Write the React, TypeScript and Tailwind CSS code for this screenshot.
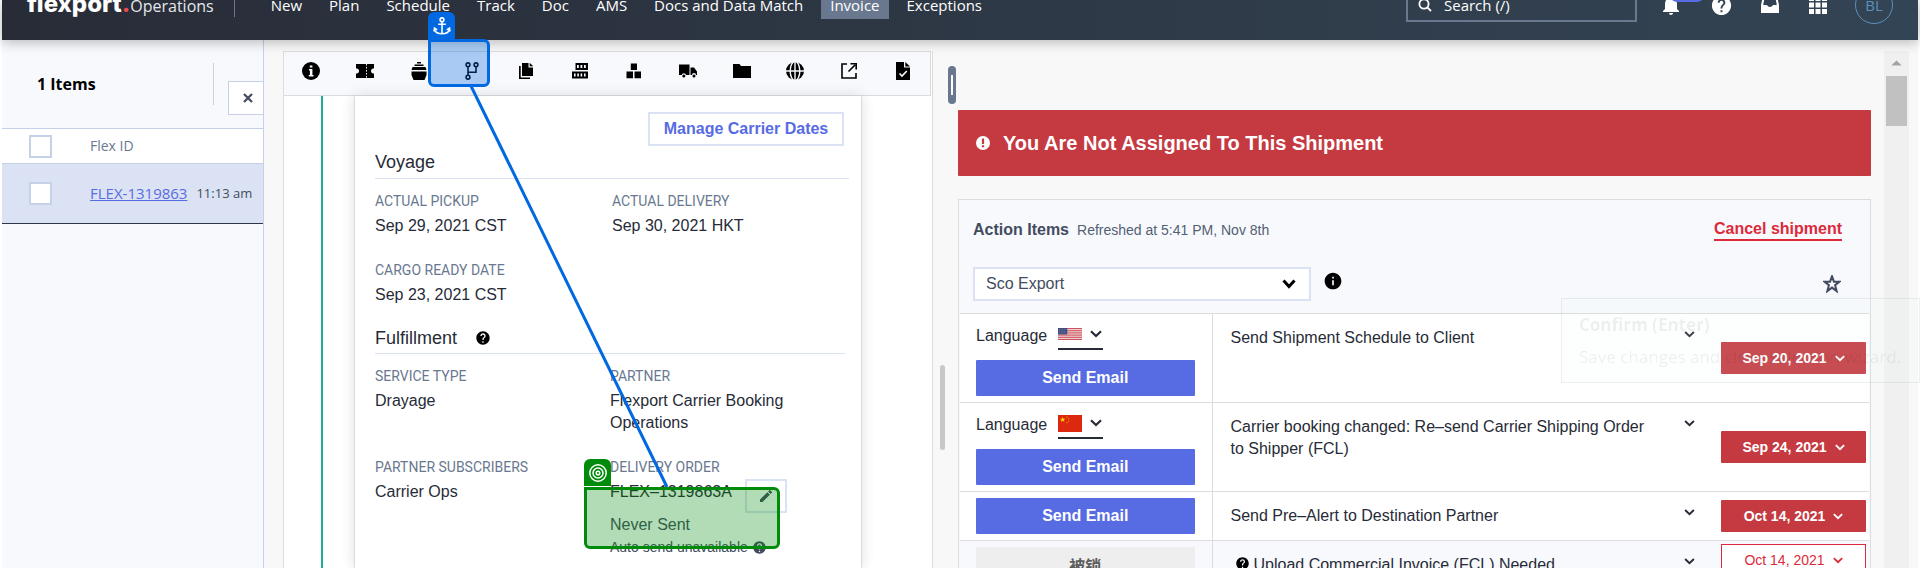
import React from "react";
import {
  MdArrowDropUp,
  MdEdit,
  MdHelp,
  MdInfo,
  MdNotifications,
} from "react-icons/md";

const bodyFont = "font-['Liberation_Sans',sans-serif]";
const labelFont = "font-['Roboto','Liberation_Sans',sans-serif]";
const openSans = "font-['Open_Sans','Noto_Sans',sans-serif]";

function Chevron({ className }: { className: string }) {
  return (
    <svg viewBox="0 0 12 8" className={className} fill="none" stroke="currentColor" strokeWidth="2.2" aria-hidden="true">
      <path d="M1 1.2 L6 6 L11 1.2" />
    </svg>
  );
}

function Glyph({ children, className = "size-[18px]" }: { children: React.ReactNode; className?: string }) {
  return (
    <svg viewBox="0 0 18 18" className={className} fill="currentColor" aria-hidden="true">
      {children}
    </svg>
  );
}

const tools: { label: string; icon: React.ReactNode }[] = [
  {
    label: "Info",
    icon: (
      <Glyph>
        <circle cx="9" cy="9" r="9" />
        <path fill="#f8f9fd" d="M7.8 3.4h2.6v2.2H7.8zM7 7h3.4v6H11.500v1.400H6.800V13H7.900V8.400H7z" />
      </Glyph>
    ),
  },
  {
    label: "Ticket",
    icon: (
      <Glyph>
        <path d="M0 2h18v4.500h-1.200a2.600 2.600 0 0 0 0 5H18V16H0v-4.500h1.200a2.600 2.600 0 0 0 0-5H0z" />
        <path stroke="#f8f9fd" strokeWidth="1" strokeDasharray="1.500 1.500" d="M10.500 2v14" />
      </Glyph>
    ),
  },
  {
    label: "Vessel",
    icon: (
      <Glyph>
        <path d="M7 0h4v1.500H7zM4.500 2.500h9v1.600h-9zM2.500 5h13l1 3h-15zM1.500 9.500h15V13L14.500 18h-11L1.500 13z" />
      </Glyph>
    ),
  },
  {
    label: "Route",
    icon: (
      <Glyph>
        <g fill="none" stroke="currentColor" strokeWidth="1.600">
          <circle cx="5" cy="2.800" r="1.900" />
          <circle cx="5" cy="15.200" r="1.900" />
          <circle cx="13" cy="2.800" r="1.900" />
          <path d="M5 4.700v8.600M5 10.200h8V4.700" />
        </g>
      </Glyph>
    ),
  },
  {
    label: "Documents",
    icon: (
      <Glyph>
        <path d="M5 1h6.500v4.500H16V14H5zM12.700 0.800L16.200 4.300h-3.500zM2 4h1.700v11.500H13V17H2z" />
      </Glyph>
    ),
  },
  {
    label: "Containers",
    icon: (
      <Glyph>
        <path d="M4.500 1H17v7H4.500zM1 9.500h16v7H1z" />
        <path fill="#f8f9fd" d="M6 3h1.800v3H6zM9.500 3h1.800v3H9.500zM13 3h1.800v3H13zM3 11.500h1.600v3H3zM6.300 11.500h1.600v3H6.300zM9.600 11.500h1.600v3H9.600zM13 11.500h1.600v3H13z" />
      </Glyph>
    ),
  },
  {
    label: "Cargo",
    icon: (
      <Glyph>
        <path d="M5.800 1.500H12V8H5.800zM1.500 9.500H8v6.800H1.500zM9.500 9.500H16v6.800H9.500z" />
      </Glyph>
    ),
  },
  {
    label: "Trucking",
    icon: (
      <Glyph>
        <path d="M0 2.500h10.500V13H7a2.200 2.200 0 0 0-4.300 0H0zM11.500 5.500h3.500L18 9.500V13h-1a2 2 0 0 0-4 0h-1.500z" />
        <circle cx="4.800" cy="14" r="1.500" />
        <circle cx="15" cy="14" r="1.500" />
      </Glyph>
    ),
  },
  {
    label: "Files",
    icon: (
      <Glyph>
        <path d="M0 2h6.500l1.500 2h10v12H0z" />
      </Glyph>
    ),
  },
  {
    label: "Web",
    icon: (
      <Glyph>
        <circle cx="9" cy="9" r="9" />
        <g fill="none" stroke="#f8f9fd" strokeWidth="1.400">
          <path d="M9 0v18M0 9h18" />
          <ellipse cx="9" cy="9" rx="4.800" ry="9.500" />
        </g>
      </Glyph>
    ),
  },
  {
    label: "Open",
    icon: (
      <Glyph>
        <g fill="none" stroke="currentColor" strokeWidth="1.600">
          <path d="M7 2H2v14h14v-5M8.500 9.500L15 3M10.500 1.800H16.200V7.500" />
        </g>
      </Glyph>
    ),
  },
  {
    label: "Approve",
    icon: (
      <Glyph>
        <path d="M2 0h8v5.500h6V18H2zM11.300 0L16 4.500h-4.700z" />
        <path fill="none" stroke="#f8f9fd" strokeWidth="1.600" d="M5.500 11.500L8 14l4.800-5" />
      </Glyph>
    ),
  },
];

const navItems = ["New", "Plan", "Schedule", "Track", "Doc", "AMS", "Docs and Data Match", "Invoice", "Exceptions"];

function Header() {
  return (
    <header className="relative z-10 h-10 shrink-0 overflow-visible bg-linear-to-r from-[#282c37] to-[#334454] text-white shadow-[0_2px_12px_rgba(0,0,0,0.28)]">
      <div className={`-mt-[30px] flex h-[70px] items-center pr-[25px] pl-[25px] text-[15px] ${openSans}`}>
        <a href="#home" className="flex items-baseline">
          <span className="font-['Inter'] text-2xl leading-6 font-extrabold">flexport</span>
          <span className="font-['Inter'] text-2xl leading-6 font-extrabold text-[#f4484f]">.</span>
          <span className="text-base leading-6 text-gray-200">Operations</span>
        </a>
        <span className="ml-5 h-6 w-px bg-[#6a788e]" />
        <nav className="ml-[27px] flex items-center gap-[9px]">
          {navItems.map((item) => (
            <a
              key={item}
              href={`#${item}`}
              className={item === "Invoice" ? "bg-[#69788f] px-[9px] py-1 leading-5" : "px-[9px] py-1 leading-5"}
            >
              {item}
            </a>
          ))}
        </nav>
        <label className="ml-auto flex h-[34px] w-[231px] shrink-0 items-center gap-3 border-2 border-[#69788f] pl-[10px]">
          <svg viewBox="0 0 14 14" className="size-3.5" fill="none" stroke="white" strokeWidth="1.800" aria-hidden="true">
            <circle cx="6" cy="6" r="4.600" />
            <path d="M9.300 9.300L13 13" />
          </svg>
          <input type="text" aria-label="Search" placeholder="Search (/)" className="w-40 bg-transparent placeholder:text-white" />
        </label>
        <div className="ml-[22px] flex shrink-0 items-center">
          <button aria-label="Notifications" className="relative">
            <MdNotifications className="size-6" />
            <span className="absolute -top-2 left-2.5 h-[17px] w-9 rounded-full bg-[#576be3]" />
          </button>
          <button aria-label="Help" className="ml-[27px]">
            <MdHelp className="size-[23px]" />
          </button>
          <button aria-label="Inbox" className="ml-[28px]">
            <svg viewBox="0 0 18 18" className="size-[18px]" fill="white" aria-hidden="true">
              <path fillRule="evenodd" d="M2 0h14l2 9v8H0V9zM3.500 2L2.200 9H6a3.200 3.200 0 0 0 6 0h3.800l-1.300-7z" />
            </svg>
          </button>
          <button aria-label="Apps" className="ml-[30px]">
            <svg viewBox="0 0 18 18" className="size-[18px]" fill="white" aria-hidden="true">
              <path d="M0 0h5v5H0zM6.500 0h5v5h-5zM13 0h5v5h-5zM0 6.500h5v5H0zM6.500 6.500h5v5h-5zM13 6.500h5v5h-5zM0 13h5v5H0zM6.500 13h5v5h-5zM13 13h5v5h-5z" />
            </svg>
          </button>
          <button className="ml-[28px] flex size-[38px] items-center justify-center rounded-full border border-[#5b90bd] text-[15px] text-[#5b90bd]">
            BL
          </button>
        </div>
      </div>
    </header>
  );
}

function Sidebar() {
  return (
    <aside className={`w-[262px] shrink-0 border-r border-[#c5d1e6] bg-[#f8f9fd] ${openSans}`}>
      <div className="relative flex h-[88px] items-center pl-[35px]">
        <h2 className="text-base font-bold text-black">1 Items</h2>
        <span className="mr-[49px] ml-auto h-[42px] w-px bg-[#c5d1e6]" />
        <button
          aria-label="Close"
          className="absolute right-0 bottom-[13px] flex h-[34px] w-[35px] items-center justify-center border border-r-0 border-[#c5d1e6] bg-white pl-1 text-[#434c5e]"
        >
          <svg viewBox="0 0 10 10" className="size-2.5" stroke="currentColor" strokeWidth="2.200" aria-hidden="true">
            <path d="M1 1l8 8M9 1L1 9" />
          </svg>
        </button>
      </div>
      <div className="flex h-9 items-center border-y border-[#c5d1e6] bg-white pl-[27px] text-sm text-[#6a788e]">
        <input type="checkbox" aria-label="Select all" className="size-[23px] appearance-none border-2 border-[#c5d1e6] bg-white" />
        <span className="ml-[38px]">Flex ID</span>
      </div>
      <div className="flex h-[60px] items-center border-b border-[#2b3648] bg-[#dae2f3] pl-[27px]">
        <input type="checkbox" aria-label="Select FLEX-1319863" className="size-[23px] appearance-none border-2 border-[#c5d1e6] bg-white" />
        <a href="#flex" className="ml-[38px] text-[15px] text-[#576be3] underline">FLEX-1319863</a>
        <span className="ml-[9px] text-[13px] whitespace-nowrap text-[#434c5e]">11:13 am</span>
      </div>
    </aside>
  );
}

function Field({ label, children }: { label: string; children: React.ReactNode }) {
  return (
    <div>
      <dt className={`text-sm leading-5 text-[#69788f] ${labelFont}`}>{label}</dt>
      <dd className="mt-1 text-base leading-[22px] text-[#272b37]">{children}</dd>
    </div>
  );
}

function DetailsPanel() {
  return (
    <section className="mt-[11px] ml-[19px] flex w-[650px] shrink-0 flex-col border-r border-[#dcdcdc] bg-white">
      <div className="mr-px grid h-[45px] shrink-0 grid-cols-12 border border-[#dcdcdc] bg-[#f8f9fd] text-black">
        {tools.map((tool) => (
          <button key={tool.label} aria-label={tool.label} className="flex items-center justify-center pb-[5px]">
            {tool.icon}
          </button>
        ))}
      </div>
      <div className="flex grow border-l border-[#dcdcdc] pl-[37px]">
        <div className="w-0.5 bg-[#1fae94]" />
        <div className="ml-[31px] w-[508px] border-x border-[#dcdcdc] px-5 pt-4 shadow-[0_0_14px_rgba(0,0,0,0.12)]">
          <div className="-mr-[3px] flex justify-end">
            <button className="h-[34px] w-[196px] border-2 border-[#dae2f3] bg-white text-base font-bold whitespace-nowrap text-[#576be3]">
              Manage Carrier Dates
            </button>
          </div>
          <h3 className="-mr-2 border-b border-[#dae2f3] pt-1 pb-1 text-lg leading-6 text-[#272b37]">Voyage</h3>
          <dl className="-mr-2 grid grid-cols-2 gap-y-[23px] pt-3">
            <Field label="ACTUAL PICKUP">Sep 29, 2021 CST</Field>
            <Field label="ACTUAL DELIVERY">Sep 30, 2021 HKT</Field>
            <Field label="CARGO READY DATE">Sep 23, 2021 CST</Field>
          </dl>
          <h3 className="-mr-1 flex items-center gap-[18px] border-b border-[#dae2f3] pt-5 pb-[3px] text-lg leading-6 text-[#272b37]">
            Fulfillment
            <MdHelp className="size-4 text-black" />
          </h3>
          <dl className="-mr-1 grid grid-cols-2 gap-y-[23px] pt-3">
            <Field label="SERVICE TYPE">Drayage</Field>
            <Field label="PARTNER">Flexport Carrier Booking Operations</Field>
            <Field label="PARTNER SUBSCRIBERS">Carrier Ops</Field>
            <Field label="DELIVERY ORDER">
              <div className="flex h-[23px] items-start">
                <span>FLEX–1319863A</span>
                <button
                  aria-label="Edit delivery order"
                  className="-mt-0.5 mr-[58px] ml-auto flex h-[34px] w-[42px] items-center justify-center border-2 border-[#dae2f3]"
                >
                  <MdEdit className="size-4 text-[#434c5e]" />
                </button>
              </div>
              <div className="mt-2.5 text-[#434c5e]">Never Sent</div>
              <div className="flex items-center gap-1 text-sm leading-[22px] text-[#434c5e]">
                Auto send unavailable
                <MdHelp className="size-[15px]" />
              </div>
            </Field>
          </dl>
        </div>
      </div>
    </section>
  );
}

const usStripes = [0, 2, 4, 6, 8, 10, 12];

function UsFlag() {
  return (
    <svg viewBox="0 0 26 13" className="h-3 w-6" preserveAspectRatio="none" aria-hidden="true">
      <rect width="26" height="13" fill="#f5e9ea" />
      {usStripes.map((y) => (
        <rect key={y} y={y} width="26" height="1" fill="#c9434e" />
      ))}
      <rect width="10" height="7" fill="#414f80" />
      <path stroke="#8f98b8" strokeWidth="0.700" strokeDasharray="0.800 1.200" d="M1 1.700h8M1 3.500h8M1 5.300h8" />
    </svg>
  );
}

function ChinaFlag() {
  return (
    <svg viewBox="0 0 23 17" className="h-[17px] w-6" preserveAspectRatio="none" aria-hidden="true">
      <rect width="23" height="17" fill="#dd2810" />
      <path fill="#ffd900" d="M4.500 2l.7 1.800h1.900L5.600 5l.6 1.900-1.700-1.100-1.700 1.100.6-1.900-1.500-1.200h1.900z" />
      <g fill="#f5a800">
        <circle cx="8.600" cy="2.200" r="0.600" />
        <circle cx="10.300" cy="3.800" r="0.600" />
        <circle cx="10.300" cy="6" r="0.600" />
        <circle cx="8.600" cy="7.700" r="0.600" />
      </g>
    </svg>
  );
}

type Action = {
  text: string;
  date: string;
  flag?: React.ReactNode;
  locked?: boolean;
};

const actions: Action[] = [
  { text: "Send Shipment Schedule to Client", date: "Sep 20, 2021", flag: <UsFlag /> },
  { text: "Carrier booking changed: Re–send Carrier Shipping Order to Shipper (FCL)", date: "Sep 24, 2021", flag: <ChinaFlag /> },
  { text: "Send Pre–Alert to Destination Partner", date: "Oct 14, 2021" },
  { text: "Upload Commercial Invoice (FCL) Needed", date: "Oct 14, 2021", locked: true },
];

function ActionRow({ action }: { action: Action }) {
  return (
    <tr className={action.locked ? "border-t border-[#dcdcdc] bg-[#f8f9fd]" : "border-t border-[#dcdcdc] bg-white"}>
      <td className="border-r border-[#dcdcdc] py-1.5 pr-[17px] pl-4 align-top">
        {action.flag && (
          <div className="flex h-10 items-start gap-3 text-base text-[#272b37]">
            <span className="w-[70px] pt-1 leading-6">Language</span>
            <button aria-label="Choose language" className="flex h-[30px] w-[45px] items-center justify-between border-b-2 border-[#272b37] pr-px">
              {action.flag}
              <Chevron className="h-2 w-3" />
            </button>
          </div>
        )}
        {action.locked ? (
          <button disabled className="block h-9 w-full bg-[#eeeeee] font-['Noto_Sans_CJK_SC',sans-serif] text-base font-bold text-[#5c5c5c]">
            被锁
          </button>
        ) : (
          <button className="block h-9 w-full rounded-[1px] bg-[#576be3] text-base font-bold text-white">Send Email</button>
        )}
      </td>
      <td className="py-[13px] pr-2 pl-[18px] align-top text-base leading-[22px] text-[#272b37]">
        {action.locked && <MdHelp className="mr-1 ml-1 inline size-[15px] align-[-1px] text-black" />}
        {action.text}
      </td>
      <td className="pt-[17px] align-top">
        <button aria-label="Show details" className="ml-[26px] block text-[#272b37]">
          <Chevron className="h-[7px] w-[11px]" />
        </button>
      </td>
      <td className={action.locked ? "pt-[3px] align-top" : "align-middle"}>
        <button
          className={
            action.locked
              ? "flex h-8 w-[145px] items-center justify-center gap-2 border border-[#dc2a3b] bg-white text-sm text-[#dc2a3b]"
              : "flex h-8 w-[145px] items-center justify-center gap-2 rounded-[1px] bg-[#c53941] text-sm font-bold text-white"
          }
        >
          {action.date}
          <Chevron className="h-[7px] w-[10px]" />
        </button>
      </td>
    </tr>
  );
}

function ActionsPanel() {
  return (
    <main className="mt-[59px] ml-[3px] min-w-0 grow pt-[11px]">
      <div className="flex h-[66px] items-center gap-[13px] rounded-[1px] bg-[#c53941] pl-[18px] text-white">
        <svg viewBox="0 0 14 14" className="size-3.5" aria-hidden="true">
          <circle cx="7" cy="7" r="7" fill="white" />
          <path fill="#c53941" d="M5.900 2.500h2.200v5.500H5.900zM5.900 9.200h2.200v2H5.900z" />
        </svg>
        <h1 className="text-xl font-bold">You Are Not Assigned To This Shipment</h1>
      </div>
      <section className="mt-[23px] border border-[#dcdcdc] bg-[#f8f9fd] px-px">
        <div className="flex h-[60px] items-center pr-[27px] pl-[13px]">
          <h2 className="text-base font-bold text-[#434c5e]">Action Items</h2>
          <span className="ml-2 text-sm text-[#535f74]">Refreshed at 5:41 PM, Nov 8th</span>
          <button className="ml-auto border-b-2 border-[#dc2a3b] text-base leading-5 font-bold text-[#dc2a3b]">Cancel shipment</button>
        </div>
        <div className="flex items-center pt-[7px] pr-[28px] pb-3 pl-[13px]">
          <div className="grid w-[338px] items-center">
            <select
              aria-label="Action group"
              className="col-start-1 row-start-1 h-[34px] appearance-none border-2 border-[#dae2f3] bg-white pl-[11px] text-base text-[#434c5e]"
            >
              <option>Sco Export</option>
            </select>
            <svg viewBox="0 0 14 10" className="pointer-events-none col-start-1 row-start-1 mr-[15px] h-[10px] w-[14px] justify-self-end" fill="none" stroke="black" strokeWidth="3" aria-hidden="true">
              <path d="M1.500 1.500L7 7.500l5.500-6" />
            </svg>
          </div>
          <MdInfo className="mb-1.5 ml-3 size-5 text-black" />
          <button aria-label="Favourite" className="ml-auto text-[#434c5e]">
            <svg viewBox="1 1 14 14" className="size-[18px]" fill="none" stroke="currentColor" strokeWidth="1.600" aria-hidden="true">
              <path d="M8 2l1.500 4.200h4.300l-3.400 2.700 1.200 4.600L8 10.800l-3.600 2.700 1.200-4.600-3.400-2.700h4.300z" />
            </svg>
          </button>
        </div>
        <table className="w-full table-fixed border-collapse">
          <colgroup>
            <col className="w-[252px]" />
            <col />
            <col className="w-[63px]" />
            <col className="w-[148px]" />
          </colgroup>
          <tbody>
            {actions.map((action) => (
              <ActionRow key={action.text} action={action} />
            ))}
          </tbody>
        </table>
      </section>
    </main>
  );
}

function Annotations() {
  return (
    <>
      <div className="absolute top-3 left-[428px] z-20 flex size-[27px] items-center justify-center rounded-t-md bg-[#0068e0] text-white">
        <svg viewBox="0 0 18 18" className="size-[18px]" fill="none" stroke="currentColor" strokeWidth="1.600" aria-hidden="true">
          <circle cx="9" cy="2.800" r="1.900" />
          <path d="M9 4.700v12M5.200 7.200h7.600M1.500 12.500c.8 2.600 3.600 4.300 7.500 4.300s6.700-1.700 7.500-4.300M1 14.500l.5-3.500 2.700 1.800M17 14.500l-.5-3.500-2.700 1.800" />
        </svg>
      </div>
      <div className="absolute top-[39px] left-[428px] z-20 h-12 w-[62px] rounded-md rounded-tl-none border-[3px] border-[#0068e0] bg-[#0068e0]/32" />
      <svg className="absolute top-[86px] left-[469px] z-20 h-[402px] w-[200px]" viewBox="0 0 200 402" aria-hidden="true">
        <path d="M2 0L198 401" stroke="#0068e0" strokeWidth="3" />
      </svg>
      <div className="absolute top-[459px] left-[584px] z-20 flex size-[27px] items-center justify-center rounded-t-md bg-[#008c0a] text-white">
        <svg viewBox="0 0 18 18" className="size-[18px]" fill="none" stroke="white" strokeWidth="1.500" aria-hidden="true">
          <circle cx="9" cy="9" r="8.200" />
          <circle cx="9" cy="9" r="5" />
          <circle cx="9" cy="9" r="1.800" />
        </svg>
      </div>
      <div className="absolute top-[487px] left-[584px] z-20 h-[62px] w-[196px] rounded-md rounded-tl-none border-[3px] border-[#008c0a] bg-[#008c0a]/30" />
      <div className={`absolute top-[298px] right-0 z-20 h-[85px] w-[359px] border border-black/6 bg-[#eefbf4]/10 pt-2.5 pl-[17px] text-black/8 ${openSans}`}>
        <p className="text-[17px] leading-8 font-bold">Confirm (Enter)</p>
        <p className="text-[17px] leading-8 whitespace-nowrap">Save changes and close selection wizard.</p>
      </div>
    </>
  );
}

export default function App() {
  return (
    <div className={`relative flex h-screen flex-col overflow-hidden bg-white px-0.5 ${bodyFont}`}>
      <Header />
      <div className="flex min-h-0 grow bg-[#f8f8f8]">
        <Sidebar />
        <DetailsPanel />
        <div className="flex w-[22px] shrink-0 flex-col">
          <div className="mt-[26px] ml-[15px] flex h-[38px] w-2 items-center justify-center rounded-sm bg-[#69788f]">
            <span className="h-5 w-0.5 bg-white" />
          </div>
          <div className="mt-[261px] ml-[7px] h-[85px] w-[5px] rounded-sm bg-[#c8c8c8]" />
        </div>
        <ActionsPanel />
        <div className="mt-[11px] mr-[9px] ml-[13px] w-[25px] shrink-0 bg-[#f0f0f0]">
          <MdArrowDropUp className="size-[25px] text-[#a3a3a3]" />
          <div className="mx-0.5 h-[50px] bg-[#c1c1c1]" />
        </div>
      </div>
      <Annotations />
    </div>
  );
}
